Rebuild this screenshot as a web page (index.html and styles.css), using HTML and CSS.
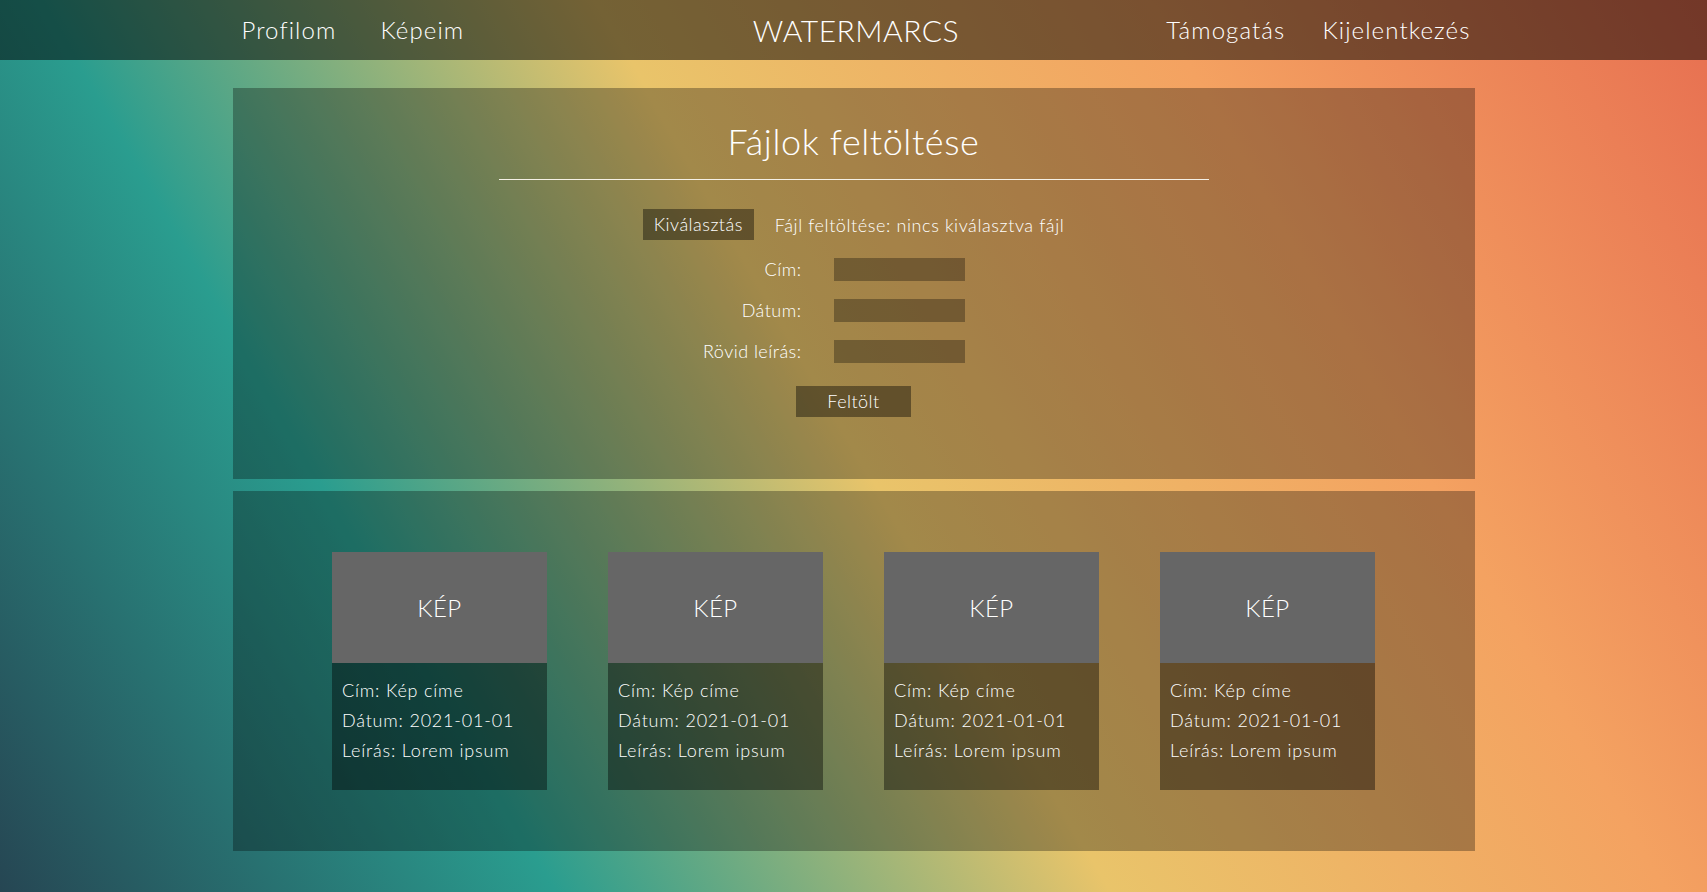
FILE: index.html
```html
<!DOCTYPE html>
<html lang="hu">
<head>
<meta charset="utf-8">
<title>WATERMARCS</title>
<link rel="stylesheet" href="styles.css">
</head>
<body>
<div class="page">
  <header class="nav">
    <div class="nav-inner">
      <div class="nav-left">
        <a class="nav-link" href="#">Profilom</a>
        <a class="nav-link" href="#">Képeim</a>
      </div>
      <div class="brand">WATERMARCS</div>
      <div class="nav-right">
        <a class="nav-link" href="#">Támogatás</a>
        <a class="nav-link" href="#">Kijelentkezés</a>
      </div>
    </div>
  </header>

  <main class="container">
    <section class="panel upload">
      <h1 class="upload-title">Fájlok feltöltése</h1>
      <div class="rule"></div>
      <div class="file-row">
        <span class="btn">Kiválasztás</span>
        <span class="file-text">Fájl feltöltése: nincs kiválasztva fájl</span>
      </div>
      <div class="fields">
        <label class="field-label">Cím:</label>
        <span class="field-input"></span>
        <label class="field-label">Dátum:</label>
        <span class="field-input"></span>
        <label class="field-label">Rövid leírás:</label>
        <span class="field-input"></span>
      </div>
      <div class="submit-row">
        <span class="btn btn-submit">Feltölt</span>
      </div>
    </section>

    <section class="panel gallery">
      <div class="card">
        <div class="card-img">KÉP</div>
        <div class="card-info">
          <div>Cím: Kép címe</div>
          <div>Dátum: 2021-01-01</div>
          <div>Leírás: Lorem ipsum</div>
        </div>
      </div>
      <div class="card">
        <div class="card-img">KÉP</div>
        <div class="card-info">
          <div>Cím: Kép címe</div>
          <div>Dátum: 2021-01-01</div>
          <div>Leírás: Lorem ipsum</div>
        </div>
      </div>
      <div class="card">
        <div class="card-img">KÉP</div>
        <div class="card-info">
          <div>Cím: Kép címe</div>
          <div>Dátum: 2021-01-01</div>
          <div>Leírás: Lorem ipsum</div>
        </div>
      </div>
      <div class="card">
        <div class="card-img">KÉP</div>
        <div class="card-info">
          <div>Cím: Kép címe</div>
          <div>Dátum: 2021-01-01</div>
          <div>Leírás: Lorem ipsum</div>
        </div>
      </div>
    </section>
  </main>
</div>
</body>
</html>
```

FILE: styles.css
```css
* {
  box-sizing: border-box;
}

html, body {
  margin: 0;
  padding: 0;
}

body {
  font-family: Lato, "Open Sans", sans-serif;
  font-weight: 300;
  letter-spacing: 0.03em;
  color: #ffffff;
}

.page {
  min-height: 100vh;
  background: linear-gradient(60deg, #264653, #2a9d8f, #e9c46a, #f4a261, #e76f51);
}

.nav {
  height: 60px;
  background: rgba(0, 0, 0, 0.5);
}

.nav-inner {
  width: 1242px;
  height: 60px;
  margin: 0 auto;
  padding: 0 4px 0 9px;
  display: grid;
  grid-template-columns: 1fr auto 1fr;
  align-items: center;
}

.nav-left {
  display: flex;
  gap: 44px;
}

.nav-right {
  display: flex;
  gap: 37px;
  justify-content: flex-end;
}

.nav-link {
  color: #ffffff;
  text-decoration: none;
  font-size: 24px;
  line-height: 30px;
  letter-spacing: 1.1px;
}

.brand {
  font-size: 30px;
  line-height: 36px;
  letter-spacing: 0.5px;
}

.container {
  width: 1242px;
  margin: 0 auto;
  padding-top: 28px;
  display: flex;
  flex-direction: column;
  gap: 12px;
}

.panel {
  background: rgba(0, 0, 0, 0.3);
}

.upload {
  padding: 31px 0 62px;
  display: flex;
  flex-direction: column;
  align-items: center;
}

.upload-title {
  margin: 0;
  font-size: 36px;
  line-height: 44px;
  font-weight: 300;
  letter-spacing: 0.6px;
}

.rule {
  width: 710px;
  height: 1px;
  background: #f4f0e6;
  margin-top: 16px;
}

.file-row {
  margin-top: 29px;
  display: flex;
  align-items: center;
  gap: 21px;
}

.btn {
  display: inline-block;
  height: 31px;
  line-height: 31px;
  padding: 0 11px;
  font-size: 18px;
  background: rgba(0, 0, 0, 0.4);
}

.file-text {
  font-size: 18px;
  letter-spacing: 0.6px;
}

.fields {
  margin-top: 18px;
  width: 100%;
  padding-right: 72px;
  display: grid;
  grid-template-columns: 1fr 1fr;
  column-gap: 32px;
  row-gap: 18px;
  align-items: center;
}

.field-label {
  justify-self: end;
  font-size: 18px;
  line-height: 23px;
}

.field-input {
  display: block;
  width: 131px;
  height: 23px;
  background: rgba(0, 0, 0, 0.3);
}

.submit-row {
  margin-top: 23px;
}

.btn-submit {
  width: 115px;
  text-align: center;
  padding: 0;
}

.gallery {
  padding: 61px 0;
  display: flex;
  justify-content: center;
  gap: 61px;
}

.card {
  width: 215px;
}

.card-img {
  height: 111px;
  background: #666666;
  display: flex;
  align-items: center;
  justify-content: center;
  font-size: 24px;
}

.card-info {
  background: rgba(0, 0, 0, 0.4);
  padding: 12px 10px 25px;
  font-size: 18px;
  line-height: 30px;
  letter-spacing: 0.8px;
}
```
